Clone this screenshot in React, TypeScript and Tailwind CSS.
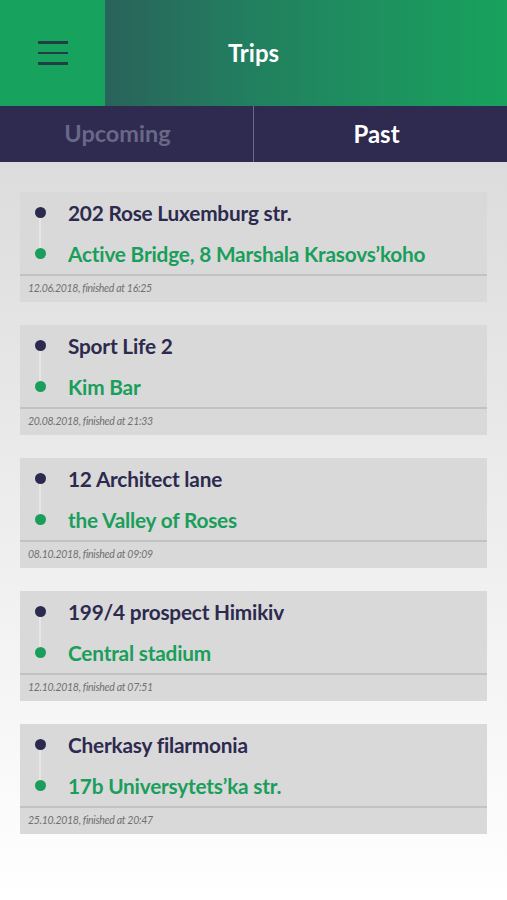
import React from 'react';

type Trip = { from: string; to: string; date: string };

const trips: Trip[] = [
    { from: '202 Rose Luxemburg str.', to: 'Active Bridge, 8 Marshala Krasovs’koho', date: '12.06.2018, finished at 16:25' },
    { from: 'Sport Life 2', to: 'Kim Bar', date: '20.08.2018, finished at 21:33' },
    { from: '12 Architect lane', to: 'the Valley of Roses', date: '08.10.2018, finished at 09:09' },
    { from: '199/4 prospect Himikiv', to: 'Central stadium', date: '12.10.2018, finished at 07:51' },
    { from: 'Cherkasy filarmonia', to: '17b Universytets’ka str.', date: '25.10.2018, finished at 20:47' },
];

const TripCard: React.FC<{ trip: Trip }> = ({ trip }) => (
    <div className="bg-[#d9d9d9]">
        <div className="relative pl-[48px]">
            <div className="absolute left-[19px] top-[20px] h-[41px] w-[2px] bg-[#e6e6e6]" />
            <div className="flex items-center h-[41px]">
                <span className="absolute left-[15px] w-[11px] h-[11px] rounded-full bg-[#2c2a4e]" />
                <span className="text-[20.8px] font-bold text-[#2c2a4e] tracking-[-0.2px]">{trip.from}</span>
            </div>
            <div className="flex items-center h-[41px]">
                <span className="absolute left-[15px] w-[11px] h-[11px] rounded-full bg-[#1a9e5b]" />
                <span className="text-[20.8px] font-bold text-[#1a9e5b] tracking-[-0.2px]">{trip.to}</span>
            </div>
        </div>
        <div className="border-t-2 border-[#c2c2c2] h-[28px] flex items-center pl-[8px]">
            <span className="text-[10.5px] italic text-[#707070] tracking-[-0.3px]">{trip.date}</span>
        </div>
    </div>
);

export default function App() {
    return (
        <div className="w-[507px] h-[900px] flex flex-col overflow-hidden" style={{ fontFamily: 'Lato, "Open Sans", sans-serif' }}>
            <div className="relative shrink-0 flex h-[106px] items-center justify-center bg-gradient-to-r from-[#2a4f57] via-[#21805f] to-[#17a25d]">
                <div className="absolute left-0 top-0 w-[105px] h-full bg-[#17a25d] flex items-center justify-center">
                    <div className="flex flex-col gap-[8px] w-[30px]">
                        <span className="h-[2.5px] bg-[#213e45]" />
                        <span className="h-[2.5px] bg-[#213e45]" />
                        <span className="h-[2.5px] bg-[#213e45]" />
                    </div>
                </div>
                <span className="text-white text-[24px] font-bold">Trips</span>
            </div>
            <div className="shrink-0 flex h-[56px] bg-[#2f2a50]">
                <div className="w-[254px] flex items-center justify-center border-r border-[#6d6a85] pr-[18px]">
                    <span className="text-[23.5px] font-bold text-[#6a6787]">Upcoming</span>
                </div>
                <div className="flex-1 flex items-center justify-center pr-[8px]">
                    <span className="text-[24px] font-bold text-white">Past</span>
                </div>
            </div>
            <div className="flex-1 bg-gradient-to-b from-[#dcdcdc] via-[#eeeeee] to-white px-[20px] pt-[30px] flex flex-col gap-[23px]">
                {trips.map((t, i) => (
                    <TripCard key={i} trip={t} />
                ))}
            </div>
        </div>
    );
}
